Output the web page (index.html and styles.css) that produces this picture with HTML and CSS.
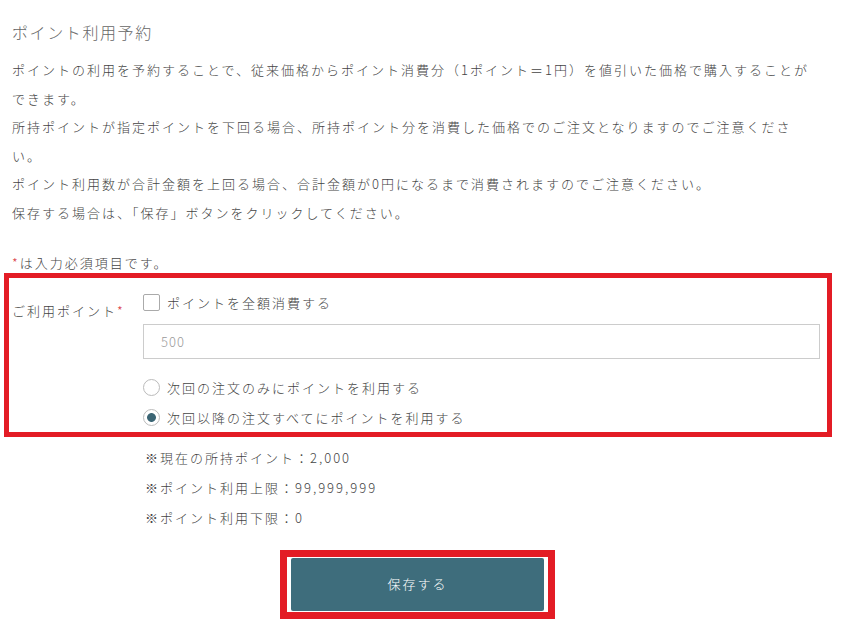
FILE: index.html
```html
<!DOCTYPE html>
<html lang="ja">
<head>
  <meta charset="UTF-8">
  <meta name="viewport" content="width=device-width, initial-scale=1.0">
  <title>ポイント利用予約</title>
  <link rel="stylesheet" href="styles.css">
</head>
<body>
  <div class="container">
    <h1 class="page-title">ポイント利用予約</h1>

    <p class="lead">ポイントの利用を予約することで、従来価格からポイント消費分（1ポイント＝1円）を値引いた価格で購入することができます。<br>所持ポイントが指定ポイントを下回る場合、所持ポイント分を消費した価格でのご注文となりますのでご注意ください。<br>ポイント利用数が合計金額を上回る場合、合計金額が0円になるまで消費されますのでご注意ください。<br>保存する場合は、「保存」ボタンをクリックしてください。</p>

    <p class="required-note"><span class="req">*</span>は入力必須項目です。</p>

    <form onsubmit="return false;">
      <!-- point setting row -->
      <div class="form-row highlight">
        <div class="form-label">ご利用ポイント<span class="req">*</span></div>
        <div class="form-field">
          <label class="option check-option"><input type="checkbox">ポイントを全額消費する</label>
          <input type="text" class="text-input" placeholder="500">
          <label class="option radio-first"><input type="radio" name="usage">次回の注文のみにポイントを利用する</label>
          <label class="option radio-next"><input type="radio" name="usage" checked>次回以降の注文すべてにポイントを利用する</label>
        </div>
      </div>

      <ul class="notes">
        <li>※現在の所持ポイント：2,000</li>
        <li>※ポイント利用上限：99,999,999</li>
        <li>※ポイント利用下限：0</li>
      </ul>

      <div class="actions">
        <div class="highlight save-box">
          <button type="submit" class="save-button">保存する</button>
        </div>
      </div>
    </form>
  </div>
</body>
</html>
```

FILE: styles.css
```css
* {
  margin: 0;
  padding: 0;
  box-sizing: border-box;
}

body {
  font-family: "Noto Sans CJK JP", "Noto Sans", sans-serif;
  font-size: 13px;
  font-weight: 300;
  color: #444;
  letter-spacing: 2px;
  background-color: #fff;
  overflow: hidden;
}

.container {
  width: 817px;
  padding: 18px 0 0 12px;
}

.page-title {
  font-size: 16px;
  font-weight: 300;
  line-height: 28px;
  letter-spacing: 1.6px;
  color: #666;
}

.lead {
  margin-top: 10px;
  line-height: 28.5px;
}

.required-note {
  margin-top: 26px;
  line-height: 20px;
}

.req {
  color: #d9363e;
}

/* red annotation frames */
.highlight {
  border: 5px solid #e31c25;
}

.form-row {
  display: flex;
  margin: 0 -15px 0 -8px;
  padding: 14px 7px 5px 3px;
}

.form-label {
  width: 131px;
  flex-shrink: 0;
  padding-top: 9px;
  line-height: 20px;
}

.form-field {
  flex: 1;
  display: flex;
  flex-direction: column;
}

.option {
  display: flex;
  align-items: center;
  gap: 7px;
  height: 20px;
  cursor: pointer;
}

.option input {
  appearance: none;
  -webkit-appearance: none;
  width: 17px;
  height: 17px;
  margin: 0;
  background-color: #fff;
  flex-shrink: 0;
}

.option input[type="checkbox"] {
  border: 1px solid #aaa;
  border-radius: 2px;
}

.option input[type="radio"] {
  border: 1px solid #bbb;
  border-radius: 50%;
}

.option input[type="radio"]:checked {
  background: radial-gradient(circle, #3b6574 0 4px, #fff 4.8px);
}

.text-input {
  margin-top: 12px;
  height: 35px;
  border: 1px solid #ccc;
  padding: 0 17px;
  font-family: inherit;
  font-size: 13px;
  font-weight: 300;
  letter-spacing: 1px;
  color: #333;
  outline: none;
}

.text-input::placeholder {
  color: #9a9a9a;
}

.radio-first {
  margin-top: 18px;
}

.radio-next {
  margin-top: 10px;
}

.notes {
  list-style: none;
  margin-top: 6px;
  padding-left: 133px;
  line-height: 30px;
}

.actions {
  display: flex;
  justify-content: center;
  margin-top: 17px;
  padding-left: 6px;
}

.save-box {
  border-width: 7px;
  padding: 1px 4px;
}

.save-button {
  display: block;
  width: 253px;
  height: 53px;
  padding-bottom: 3px;
  background-color: #3e6d7c;
  color: #fff;
  border: none;
  border-radius: 2px;
  font-family: inherit;
  font-size: 13px;
  font-weight: 300;
  letter-spacing: 2px;
  cursor: pointer;
}

.save-button:hover {
  background-color: #355f6c;
}
```
